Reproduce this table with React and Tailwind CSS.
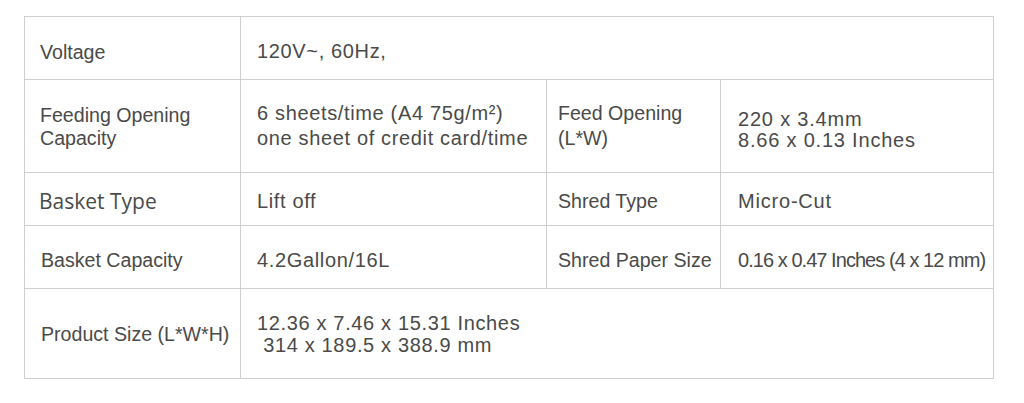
import React from 'react';

const cell = 'border border-[#cfcfcf] align-middle text-left font-normal';

export default function App() {
  return (
    <div className="w-[1024px] h-[403px] bg-white pt-4 pl-6" style={{ fontFamily: '"Liberation Sans", Arial, sans-serif' }}>
      <table className="w-[969px] table-fixed border-collapse text-[19.6px] leading-[24px] text-[#4a4a4a]">
        <colgroup>
          <col className="w-[216px]" />
          <col className="w-[306px]" />
          <col className="w-[174px]" />
          <col className="w-[273px]" />
        </colgroup>
        <tbody>
          <tr className="h-[63px]">
            <td className={`${cell} pl-[15px] pt-[7px]`}>Voltage</td>
            <td className={`${cell} pl-4 pt-[6px] text-[20px] tracking-[0.65px]`} colSpan={3}>120V~, 60Hz,</td>
          </tr>
          <tr className="h-[93px]">
            <td className={`${cell} pl-[15px] pt-[2px] leading-[23px]`}>Feeding Opening<br />Capacity</td>
            <td className={`${cell} pl-4 text-[20px] tracking-[0.65px] leading-[25px]`}>6 sheets/time (A4 75g/m²)<br />one sheet of credit card/time</td>
            <td className={`${cell} pl-[11px] leading-[25px]`}>Feed Opening<br />(L*W)</td>
            <td className={`${cell} pl-[17px] pt-[8px] text-[20px] leading-[21px] tracking-[0.8px]`}>220 x 3.4mm<br />8.66 x 0.13 Inches</td>
          </tr>
          <tr className="h-[53px]">
            <td className={`${cell} pl-[14px] pt-[3px] text-[21px]`} style={{ fontFamily: '"Open Sans", sans-serif' }}>Basket Type</td>
            <td className={`${cell} pl-4 pt-[3px] text-[20px] tracking-[0.65px]`}>Lift off</td>
            <td className={`${cell} pl-[11px] pt-[3px]`}>Shred Type</td>
            <td className={`${cell} pl-[17px] pt-[3px] text-[20px] tracking-[0.8px]`}>Micro-Cut</td>
          </tr>
          <tr className="h-[63px]">
            <td className={`${cell} pl-[16px] pt-[6px]`}>Basket Capacity</td>
            <td className={`${cell} pl-4 pt-[6px] text-[20px] tracking-[0.65px]`}>4.2Gallon/16L</td>
            <td className={`${cell} pl-[11px] pt-[6px]`}>Shred Paper Size</td>
            <td className={`${cell} pl-[17px] pt-[6px] text-[20px] tracking-[-0.95px]`}>0.16 x 0.47 Inches (4 x 12 mm)</td>
          </tr>
          <tr className="h-[90px]">
            <td className={`${cell} pl-4`}>Product Size (L*W*H)</td>
            <td className={`${cell} pl-4 text-[20px] leading-[22px] tracking-[0.65px] whitespace-pre`} colSpan={3}>{'12.36 x 7.46 x 15.31 Inches\n 314 x 189.5 x 388.9 mm'}</td>
          </tr>
        </tbody>
      </table>
    </div>
  );
}
